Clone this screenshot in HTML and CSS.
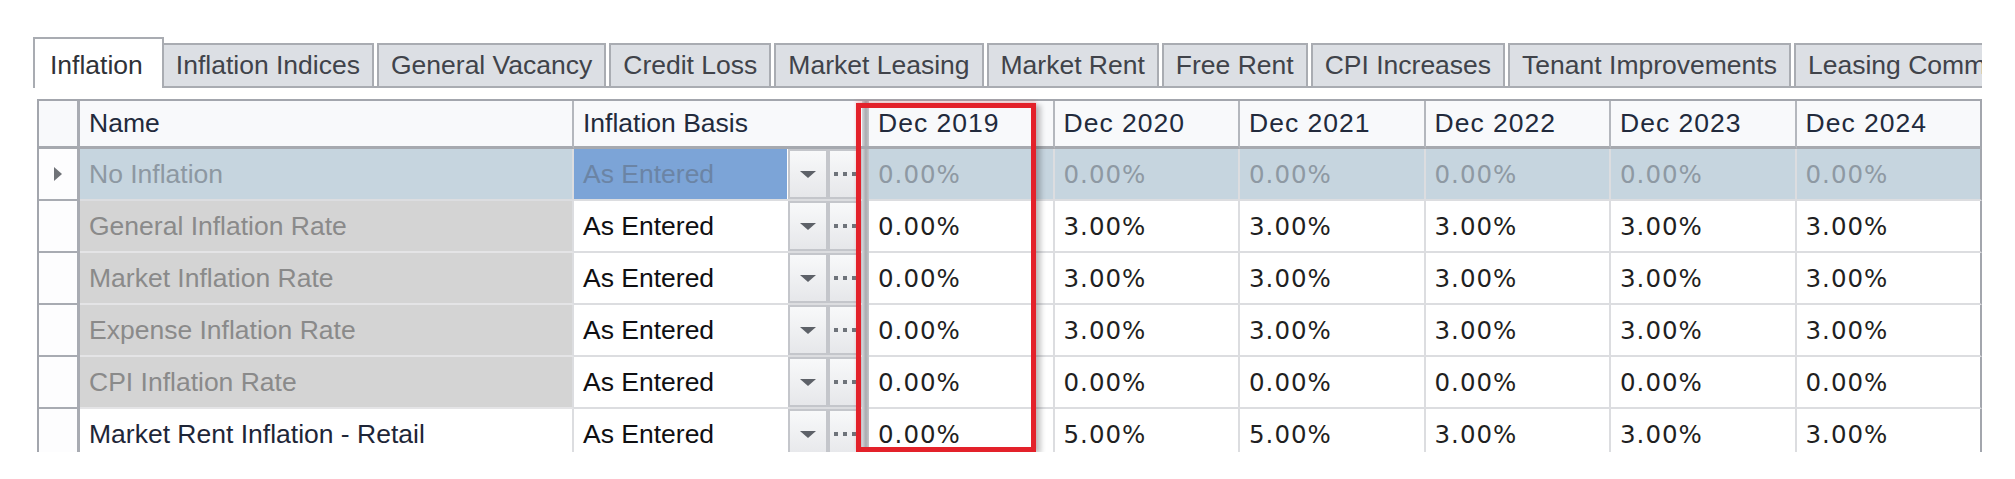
FILE: index.html
```html
<!DOCTYPE html>
<html>
<head>
<meta charset="utf-8">
<title>Inflation</title>
<link rel="stylesheet" href="styles.css">
</head>
<body>
<div class="page">
  <div class="tabs">
    <div class="tab active">Inflation</div>
    <div class="tab">Inflation Indices</div>
    <div class="tab">General Vacancy</div>
    <div class="tab">Credit Loss</div>
    <div class="tab">Market Leasing</div>
    <div class="tab">Market Rent</div>
    <div class="tab">Free Rent</div>
    <div class="tab">CPI Increases</div>
    <div class="tab">Tenant Improvements</div>
    <div class="tab">Leasing Commissions</div>
  </div>

  <div class="grid-wrap">
    <div class="grid">
      <div class="row head">
        <div class="c ind"></div>
        <div class="c name">Name</div>
        <div class="c basis"><span class="htext">Inflation Basis</span></div>
        <div class="c sep"></div>
        <div class="c val">Dec 2019</div>
        <div class="c val">Dec 2020</div>
        <div class="c val">Dec 2021</div>
        <div class="c val">Dec 2022</div>
        <div class="c val">Dec 2023</div>
        <div class="c val">Dec 2024</div>
      </div>

      <div class="row sel">
        <div class="c ind"><span class="arrow"></span></div>
        <div class="c name">No Inflation</div>
        <div class="c basis"><span class="btext">As Entered</span><span class="btn dd"><i></i></span><span class="btn el"><i></i><i></i><i></i></span></div>
        <div class="c sep"></div>
        <div class="c val">0.00%</div>
        <div class="c val">0.00%</div>
        <div class="c val">0.00%</div>
        <div class="c val">0.00%</div>
        <div class="c val">0.00%</div>
        <div class="c val">0.00%</div>
      </div>

      <div class="row">
        <div class="c ind"></div>
        <div class="c name dis">General Inflation Rate</div>
        <div class="c basis"><span class="btext">As Entered</span><span class="btn dd"><i></i></span><span class="btn el"><i></i><i></i><i></i></span></div>
        <div class="c sep"></div>
        <div class="c val">0.00%</div>
        <div class="c val">3.00%</div>
        <div class="c val">3.00%</div>
        <div class="c val">3.00%</div>
        <div class="c val">3.00%</div>
        <div class="c val">3.00%</div>
      </div>

      <div class="row">
        <div class="c ind"></div>
        <div class="c name dis">Market Inflation Rate</div>
        <div class="c basis"><span class="btext">As Entered</span><span class="btn dd"><i></i></span><span class="btn el"><i></i><i></i><i></i></span></div>
        <div class="c sep"></div>
        <div class="c val">0.00%</div>
        <div class="c val">3.00%</div>
        <div class="c val">3.00%</div>
        <div class="c val">3.00%</div>
        <div class="c val">3.00%</div>
        <div class="c val">3.00%</div>
      </div>

      <div class="row">
        <div class="c ind"></div>
        <div class="c name dis">Expense Inflation Rate</div>
        <div class="c basis"><span class="btext">As Entered</span><span class="btn dd"><i></i></span><span class="btn el"><i></i><i></i><i></i></span></div>
        <div class="c sep"></div>
        <div class="c val">0.00%</div>
        <div class="c val">3.00%</div>
        <div class="c val">3.00%</div>
        <div class="c val">3.00%</div>
        <div class="c val">3.00%</div>
        <div class="c val">3.00%</div>
      </div>

      <div class="row">
        <div class="c ind"></div>
        <div class="c name dis">CPI Inflation Rate</div>
        <div class="c basis"><span class="btext">As Entered</span><span class="btn dd"><i></i></span><span class="btn el"><i></i><i></i><i></i></span></div>
        <div class="c sep"></div>
        <div class="c val">0.00%</div>
        <div class="c val">0.00%</div>
        <div class="c val">0.00%</div>
        <div class="c val">0.00%</div>
        <div class="c val">0.00%</div>
        <div class="c val">0.00%</div>
      </div>

      <div class="row">
        <div class="c ind"></div>
        <div class="c name">Market Rent Inflation - Retail</div>
        <div class="c basis"><span class="btext">As Entered</span><span class="btn dd"><i></i></span><span class="btn el"><i></i><i></i><i></i></span></div>
        <div class="c sep"></div>
        <div class="c val">0.00%</div>
        <div class="c val">5.00%</div>
        <div class="c val">5.00%</div>
        <div class="c val">3.00%</div>
        <div class="c val">3.00%</div>
        <div class="c val">3.00%</div>
      </div>
    </div>
    <div class="highlight"></div>
  </div>
</div>
</body>
</html>
```

FILE: styles.css
```css
html, body {
  margin: 0;
  padding: 0;
  background: #ffffff;
}

body {
  font-family: "Liberation Sans", Arial, sans-serif;
  font-size: 26.5px;
  color: #1b1b1b;
}

.page {
  padding: 37px 0 0 33px;
}

/* ---------- Tabs ---------- */
.tabs {
  display: flex;
  align-items: flex-end;
  height: 51px;
  width: 1949px;
  overflow: hidden;
  white-space: nowrap;
  background: linear-gradient(#a7aab0, #a7aab0) left bottom / 100% 2px no-repeat;
}

.tab {
  flex: none;
  box-sizing: border-box;
  height: 45px;
  display: flex;
  align-items: center;
  padding: 0 12px;
  margin-left: 3px;
  background: #dcdfe4;
  border: 2px solid #a9acb2;
  color: #40434a;
}

.tab.active {
  height: 51px;
  margin-left: 0;
  padding: 4px 19px 0 15px;
  background: #ffffff;
  border-bottom: none;
  color: #2f3238;
}

.tab.active + .tab {
  margin-left: 0;
  border-left-width: 0;
}

/* ---------- Grid ---------- */
.grid-wrap {
  position: relative;
  margin: 11px 0 0 4px;
  width: 1945px;
  height: 353px;
  overflow: hidden;
}

.grid {
  border-left: 2px solid #a3a6ad;
  border-top: 2px solid #a3a6ad;
}

.row {
  display: grid;
  grid-template-columns: 41px 494px 288px 7px repeat(6, 185.5px);
  height: 52px;
}

.row.head {
  height: 48px;
}

.c {
  box-sizing: border-box;
  display: flex;
  align-items: center;
  padding-left: 9px;
  white-space: nowrap;
  overflow: hidden;
  border-right: 2px solid #dcdde0;
  border-bottom: 2px solid #dcdde0;
  background: #ffffff;
}

.c.ind {
  padding: 0;
  justify-content: center;
  border-right: 3px solid #a8abb2;
  border-bottom-color: #a8abb2;
  background: #fdfdfe;
}

.c.basis {
  padding: 0;
  border-right: none;
}

.c.sep {
  padding: 0;
  border: none;
  background: linear-gradient(to right, #d5d6d9, #a9abaf 55%, #c6c7ca);
}

.c.val {
  font-family: "DejaVu Sans", Verdana, sans-serif;
  font-size: 24.5px;
  letter-spacing: 1px;
  color: #1f1f22;
}

.c.val:last-child {
  border-right-color: #a3a6ad;
}

/* header */
.head .c {
  background: #f8f9fb;
  color: #222a3c;
  border-bottom: 3px solid #a6a9af;
  border-right-color: #b4b7bd;
}

.head .c.ind {
  border-right: 3px solid #a8abb2;
}

.head .c.val {
  font-family: "Liberation Sans", Arial, sans-serif;
  font-size: 26.5px;
  letter-spacing: 1px;
  padding-left: 9px;
}

.head .c.val:last-child {
  border-right-color: #a3a6ad;
}

.head .c.sep {
  background: linear-gradient(to right, #d5d6d9, #a9abaf 55%, #c6c7ca);
}

.htext {
  padding-left: 9px;
}

/* body cells */
.name {
  color: #1e2638;
}

.name.dis {
  background: #d4d4d4;
  color: #8a8a8a;
  border-bottom-color: #e4e4e6;
}

.btext {
  flex: 1;
  align-self: stretch;
  display: flex;
  align-items: center;
  padding-left: 9px;
  margin-right: 1px;
  color: #0f0f12;
}

.btn {
  flex: none;
  box-sizing: border-box;
  align-self: stretch;
  display: flex;
  align-items: center;
  border: 2px solid #c4c6cb;
  background: linear-gradient(#f8f9fa, #e6e7ea);
}

.dd {
  width: 40px;
  justify-content: center;
}

.dd i {
  width: 0;
  height: 0;
  border-left: 8px solid transparent;
  border-right: 8px solid transparent;
  border-top: 7px solid #5d6168;
}

.el {
  width: 34px;
  padding-left: 4px;
  gap: 5px;
}

.el i {
  flex: none;
  width: 4px;
  height: 4px;
  background: #6e737a;
}

/* selected row */
.sel .c {
  background: #c6d5df;
  color: #8d98a2;
}

.sel .c.ind {
  background: #fdfdfe;
}

.sel .c.basis {
  background: #ffffff;
}

.sel .c.sep {
  background: linear-gradient(to right, #d5d6d9, #a9abaf 55%, #c6c7ca);
}

.sel .btext {
  background: #7ca4d7;
  color: #6b84a5;
}

.sel .c.val {
  color: #8e99a3;
}

.arrow {
  width: 0;
  height: 0;
  border-top: 7px solid transparent;
  border-bottom: 7px solid transparent;
  border-left: 8px solid #707378;
}

/* ---------- Red highlight overlay ---------- */
.highlight {
  position: absolute;
  left: 819px;
  top: 4px;
  width: 180px;
  height: 349px;
  box-sizing: border-box;
  border: 5px solid #e3212a;
  box-shadow: 5px 2px 5px rgba(0, 0, 0, 0.22), 0 -2px 3px rgba(230, 70, 80, 0.25);
  pointer-events: none;
}
```
